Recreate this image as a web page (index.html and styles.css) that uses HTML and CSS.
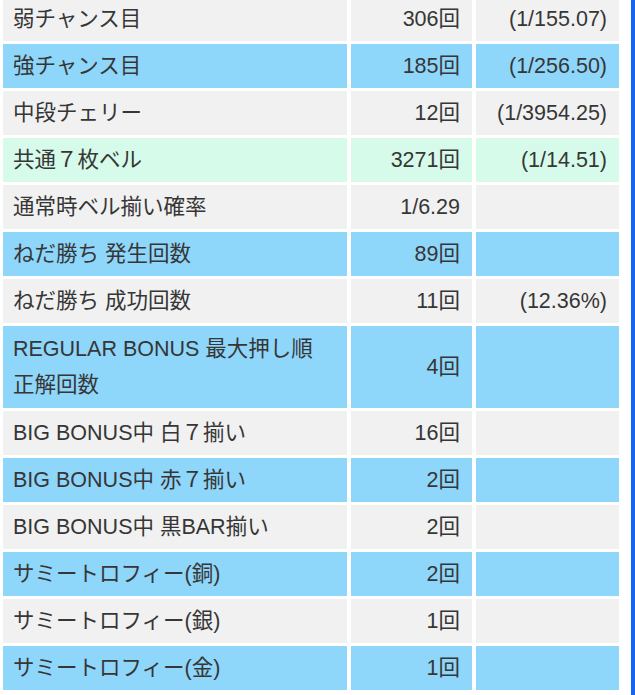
FILE: index.html
```html
<!DOCTYPE html>
<html lang="ja">
<head>
<meta charset="utf-8">
<title>データ</title>
<link rel="stylesheet" href="styles.css">
</head>
<body>
<div class="page">
<table class="stats">
<tbody>
<tr class="grey"><td class="c-name">弱チャンス目</td><td class="c-num">306回</td><td class="c-rate">(1/155.07)</td></tr>
<tr class="blue"><td class="c-name">強チャンス目</td><td class="c-num">185回</td><td class="c-rate">(1/256.50)</td></tr>
<tr class="grey"><td class="c-name">中段チェリー</td><td class="c-num">12回</td><td class="c-rate">(1/3954.25)</td></tr>
<tr class="green"><td class="c-name">共通７枚ベル</td><td class="c-num">3271回</td><td class="c-rate">(1/14.51)</td></tr>
<tr class="grey"><td class="c-name">通常時ベル揃い確率</td><td class="c-num">1/6.29</td><td class="c-rate"></td></tr>
<tr class="blue"><td class="c-name">ねだ勝ち 発生回数</td><td class="c-num">89回</td><td class="c-rate"></td></tr>
<tr class="grey"><td class="c-name">ねだ勝ち 成功回数</td><td class="c-num">11回</td><td class="c-rate">(12.36%)</td></tr>
<tr class="blue tall"><td class="c-name">REGULAR BONUS 最大押し順<br>正解回数</td><td class="c-num">4回</td><td class="c-rate"></td></tr>
<tr class="grey"><td class="c-name">BIG BONUS中 白７揃い</td><td class="c-num">16回</td><td class="c-rate"></td></tr>
<tr class="blue"><td class="c-name">BIG BONUS中 赤７揃い</td><td class="c-num">2回</td><td class="c-rate"></td></tr>
<tr class="grey"><td class="c-name">BIG BONUS中 黒BAR揃い</td><td class="c-num">2回</td><td class="c-rate"></td></tr>
<tr class="blue"><td class="c-name">サミートロフィー(銅)</td><td class="c-num">2回</td><td class="c-rate"></td></tr>
<tr class="grey"><td class="c-name">サミートロフィー(銀)</td><td class="c-num">1回</td><td class="c-rate"></td></tr>
<tr class="blue"><td class="c-name">サミートロフィー(金)</td><td class="c-num">1回</td><td class="c-rate"></td></tr>
</tbody>
</table>
</div>
</body>
</html>
```

FILE: styles.css
```css
html, body {
  margin: 0;
  padding: 0;
  background: #ffffff;
}

body {
  font-family: "Liberation Sans", "Noto Sans CJK JP", sans-serif;
  color: #363636;
}

.page {
  width: 631px;
  height: 695px;
  border-right: 4px solid #1764f4;
  overflow: hidden;
  background: #ffffff;
}

.stats {
  border-collapse: separate;
  border-spacing: 4px 3px;
  table-layout: fixed;
  width: 624px;
  margin: -6px 0 0 -1px;
  font-size: 21.5px;
  line-height: 36px;
}

.stats td {
  box-sizing: border-box;
  padding: 4px 12px 4px 10px;
  vertical-align: middle;
  white-space: nowrap;
}

.stats .tall td {
  padding-top: 5px;
  padding-bottom: 5px;
}

.c-name {
  width: 344px;
  text-align: left;
}

.c-num {
  width: 121px;
  text-align: right;
}

.c-rate {
  width: 143px;
  text-align: right;
}

.grey td {
  background: #f1f1f1;
}

.blue td {
  background: #8fd6fb;
}

.green td {
  background: #d6fbea;
}
```
